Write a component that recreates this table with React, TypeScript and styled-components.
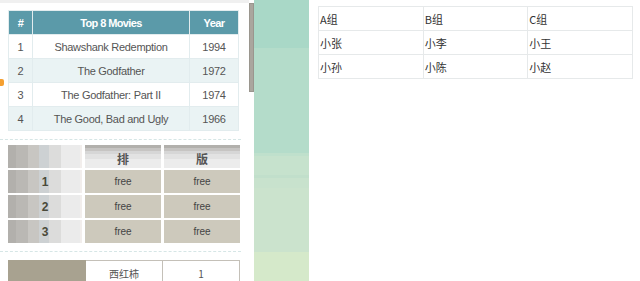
import styled, { createGlobalStyle } from 'styled-components';

const GlobalStyle = createGlobalStyle`
  html, body {
    margin: 0;
    padding: 0;
    background: #fff;
    font-family: "Liberation Sans", Arial, "Noto Sans CJK SC", sans-serif;
  }
`;

const Page = styled.div`
  display: flex;
  width: 640px;
  height: 281px;
  overflow: hidden;
`;

const LeftPanel = styled.div`
  position: relative;
  width: 249px;
  flex-shrink: 0;
  border-top: 3px solid #f0f0f0;
  padding: 7px 0 0 8px;
  box-sizing: border-box;
`;

const Marker = styled.span`
  position: absolute;
  left: 0;
  top: 76px;
  width: 4px;
  height: 7px;
  background: #f5a031;
  border-radius: 0 2px 2px 0;
`;

const ScrollTrack = styled.div`
  width: 5px;
  flex-shrink: 0;
  padding-top: 3px;
  background: #fff;
`;

const ScrollThumb = styled.div`
  height: 89px;
  background: #aaa69e;
  border: 1px solid #9a968e;
  box-sizing: border-box;
`;

const GreenStrip = styled.div`
  width: 55px;
  flex-shrink: 0;
  background: linear-gradient(
    to bottom,
    #a9d8c7 0 48px,
    #b4dcca 48px 153px,
    #bfe0cc 153px 156px,
    #c6e2cd 156px 175px,
    #c1dfcb 175px 178px,
    #c8e2cd 178px 188px,
    #cbe3cd 188px 252px,
    #d5e9ca 252px
  );
`;

const RightPanel = styled.div`
  flex: 1;
  padding: 6px 7px 0 9px;
`;

const MovieTable = styled.table`
  width: 231px;
  border-collapse: collapse;
  font-size: 11px;
  letter-spacing: -0.3px;
  color: #555;
  text-align: center;
`;

const MovieHead = styled.th<{ $w?: number }>`
  height: 23px;
  padding: 0;
  background: #5b9aa9;
  color: #fff;
  font-weight: bold;
  letter-spacing: -0.6px;
  border: 1px solid #e2ecee;
  width: ${p => (p.$w ? `${p.$w}px` : 'auto')};
`;

const MovieRow = styled.tr<{ $alt: boolean }>`
  background: ${p => (p.$alt ? '#eaf3f4' : '#fff')};
`;

const MovieCell = styled.td`
  height: 23px;
  padding: 0;
  border: 1px solid #e2ecee;
`;

const Dashed = styled.div`
  margin: 8px 8px 8px -8px;
  border-top: 1px dashed #d6e6e6;
`;

const GridTable = styled.table`
  border-collapse: separate;
  border-spacing: 3px 2px;
  margin: -5px 0 -2px -3px;
  font-size: 10px;
  color: #444;
  text-align: center;
`;

const StripeCell = styled.td`
  width: 74px;
  height: 23px;
  padding: 0;
  font-size: 12px;
  font-weight: bold;
  color: #4a4a3a;
  background: linear-gradient(
    to right,
    #b2b0ac 0 8px,
    #bab8b4 8px 20px,
    #c8c6c2 20px 31px,
    #cdd1d3 31px 41px,
    #dcdcdb 41px 53px,
    #ebebeb 53px 72px,
    #f2eeec 72px
  );
`;

const GridHead = styled.th`
  width: 76px;
  height: 23px;
  padding: 4px 0 0;
  box-sizing: border-box;
  font-size: 12px;
  color: #555;
  background: linear-gradient(
    to bottom,
    #b2b0ac 0 3px,
    #c6c4c2 3px 6px,
    #d6d6d6 6px 9px,
    #e2e2e2 9px 14px,
    #ececec 14px
  );
`;

const FreeCell = styled.td`
  height: 23px;
  padding: 0;
  background: #cdc9bc;
`;

const ProduceTable = styled.table`
  border-collapse: collapse;
  font-size: 10px;
  color: #555;
  text-align: center;
`;

const SwatchCell = styled.td`
  width: 76px;
  height: 24px;
  padding: 0;
  background: #a8a290;
  border: 1px solid #a8a290;
`;

const ProduceCell = styled.td`
  width: 76px;
  height: 24px;
  padding: 0;
  border: 1px solid #c4c0b8;
  font-family: "Noto Sans CJK SC", sans-serif;
`;

const GroupTable = styled.table`
  width: 315px;
  border-collapse: collapse;
  font-size: 11px;
  color: #333;
  font-family: "Noto Sans CJK SC", sans-serif;
`;

const GroupCell = styled.td`
  height: 23px;
  padding: 0 0 0 1px;
  border: 1px solid #e6e9ea;
  text-align: left;
`;

const movies = [
  ['1', 'Shawshank Redemption', '1994'],
  ['2', 'The Godfather', '1972'],
  ['3', 'The Godfather: Part II', '1974'],
  ['4', 'The Good, Bad and Ugly', '1966'],
];

const groups = [
  ['A组', 'B组', 'C组'],
  ['小张', '小李', '小王'],
  ['小孙', '小陈', '小赵'],
];

export default function App() {
  return (
    <>
      <GlobalStyle />
      <Page>
        <LeftPanel>
          <Marker />
          <MovieTable>
            <thead>
              <tr>
                <MovieHead $w={23}>#</MovieHead>
                <MovieHead>Top 8 Movies</MovieHead>
                <MovieHead $w={48}>Year</MovieHead>
              </tr>
            </thead>
            <tbody>
              {movies.map((m, i) => (
                <MovieRow key={m[0]} $alt={i % 2 === 1}>
                  <MovieCell>{m[0]}</MovieCell>
                  <MovieCell>{m[1]}</MovieCell>
                  <MovieCell>{m[2]}</MovieCell>
                </MovieRow>
              ))}
            </tbody>
          </MovieTable>

          <Dashed />

          <GridTable>
            <thead>
              <tr>
                <StripeCell />
                <GridHead>排</GridHead>
                <GridHead>版</GridHead>
              </tr>
            </thead>
            <tbody>
              {['1', '2', '3'].map(n => (
                <tr key={n}>
                  <StripeCell>{n}</StripeCell>
                  <FreeCell>free</FreeCell>
                  <FreeCell>free</FreeCell>
                </tr>
              ))}
            </tbody>
          </GridTable>

          <Dashed />

          <ProduceTable>
            <tbody>
              <tr>
                <SwatchCell />
                <ProduceCell>西红柿</ProduceCell>
                <ProduceCell>1</ProduceCell>
              </tr>
            </tbody>
          </ProduceTable>
        </LeftPanel>

        <ScrollTrack>
          <ScrollThumb />
        </ScrollTrack>

        <GreenStrip />

        <RightPanel>
          <GroupTable>
            <tbody>
              {groups.map(row => (
                <tr key={row[0]}>
                  {row.map(c => (
                    <GroupCell key={c}>{c}</GroupCell>
                  ))}
                </tr>
              ))}
            </tbody>
          </GroupTable>
        </RightPanel>
      </Page>
    </>
  );
}
